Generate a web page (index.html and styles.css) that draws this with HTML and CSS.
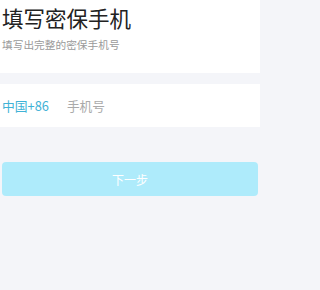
FILE: index.html
```html
<!DOCTYPE html>
<html lang="zh">
<head>
<meta charset="utf-8">
<link rel="stylesheet" href="styles.css">
</head>
<body>
<div class="page">
  <header class="head">
    <h1 class="title">填写密保手机</h1>
    <p class="sub">填写出完整的密保手机号</p>
  </header>
  <div class="row">
    <span class="code">中国+86</span>
    <span class="ph">手机号</span>
  </div>
  <div class="actions">
    <button class="btn">下一步</button>
  </div>
</div>
</body>
</html>
```
FILE: styles.css
```css
html, body {
  margin: 0;
  padding: 0;
  background: #f4f5f9;
  font-family: "Noto Sans CJK SC", "Noto Sans", sans-serif;
}
.page {
  max-width: 260px;
  min-height: 290px;
  background: #f4f5f9;
}
.head {
  background: #fff;
  height: 73px;
  padding: 0 2px;
  box-sizing: border-box;
  overflow: hidden;
}
.title {
  margin: 0;
  padding-top: 4px;
  font-size: 21.5px;
  line-height: 28px;
  font-weight: 400;
  color: #222;
}
.sub {
  margin: 6px 0 0;
  font-size: 10.7px;
  line-height: 14px;
  color: #9a9a9a;
}
.row {
  margin-top: 11px;
  background: #fff;
  height: 43px;
  display: flex;
  align-items: center;
  padding: 0 2px;
  gap: 18px;
}
.code {
  font-size: 12.8px;
  color: #3fb2d6;
}
.ph {
  font-size: 12.7px;
  color: #aaa;
}
.actions {
  padding: 35px 2px 0 2px;
}
.btn {
  display: block;
  width: 100%;
  height: 34px;
  border: 0;
  border-radius: 4px;
  background: #aeebfb;
  color: #fff;
  font-family: inherit;
  font-size: 12px;
  padding: 0;
}
```
